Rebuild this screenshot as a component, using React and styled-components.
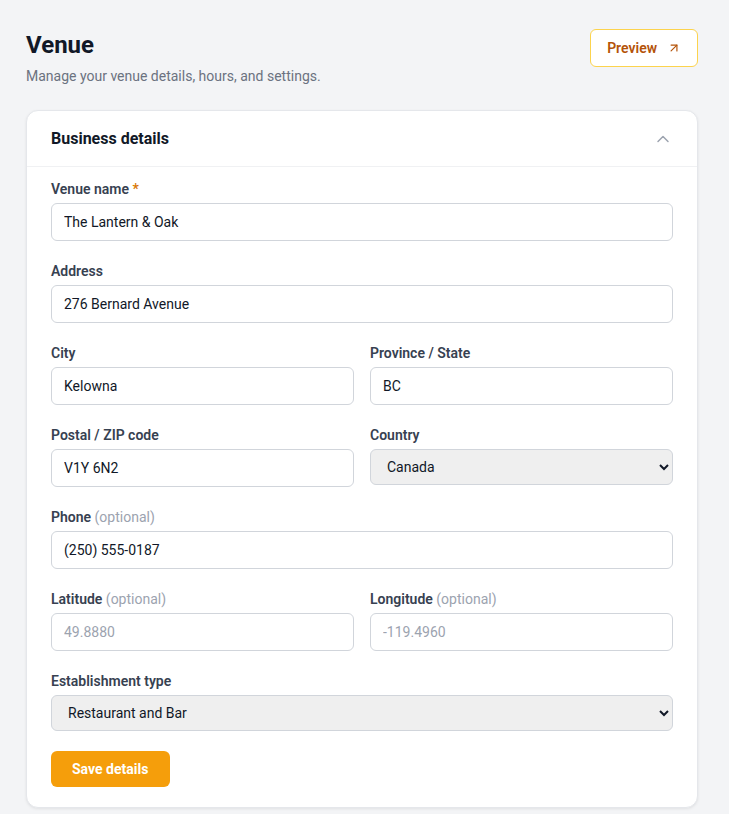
import React from "react";
import styled, { createGlobalStyle } from "styled-components";
import { ArrowUpRight, ChevronUp } from "lucide-react";

const GlobalStyle = createGlobalStyle`
  * { box-sizing: border-box; }
  body {
    margin: 0;
    background: #f3f4f6;
    font-family: Roboto, "Liberation Sans", sans-serif;
    color: #111827;
  }
`;

const Page = styled.div`
  padding: 28px 31px 6px 26px;
  min-height: 814px;
`;

const Header = styled.div`
  display: flex;
  justify-content: space-between;
  align-items: flex-start;
  margin-bottom: 24px;
`;

const Title = styled.h1`
  margin: 2px 0 0;
  font-size: 24px;
  font-weight: 700;
  line-height: 30px;
  color: #111827;
`;

const Subtitle = styled.p`
  margin: 6px 0 0;
  font-size: 14px;
  line-height: 20px;
  color: #6b7280;
`;

const PreviewButton = styled.button`
  display: flex;
  align-items: center;
  gap: 10px;
  height: 38px;
  margin-top: 1px;
  padding: 0 16px;
  background: #fff;
  border: 1px solid #fcd34d;
  border-radius: 6px;
  color: #b45309;
  font-family: inherit;
  font-size: 14px;
  font-weight: 600;
  cursor: pointer;
`;

const Card = styled.section`
  background: #fff;
  border: 1px solid #e5e7eb;
  border-radius: 12px;
  box-shadow: 0 1px 3px rgba(0, 0, 0, 0.08);
`;

const CardHeader = styled.div`
  display: flex;
  align-items: center;
  justify-content: space-between;
  height: 56px;
  padding: 0 24px;
  border-bottom: 1px solid #f0f1f3;
`;

const CardTitle = styled.h2`
  margin: 0;
  font-size: 16px;
  font-weight: 700;
  color: #111827;
`;

const Body = styled.div`
  display: flex;
  flex-direction: column;
  gap: 20px;
  padding: 12px 24px 20px;
`;

const Row = styled.div`
  display: grid;
  grid-template-columns: 1fr 1fr;
  gap: 16px;
`;

const Field = styled.div`
  display: flex;
  flex-direction: column;
  gap: 4px;
`;

const Label = styled.label`
  font-size: 14px;
  line-height: 20px;
  font-weight: 600;
  color: #374151;
`;

const Required = styled.span`
  color: #d97706;
`;

const Optional = styled.span`
  font-weight: 400;
  color: #9ca3af;
`;

const Input = styled.input`
  height: 38px;
  padding: 0 12px;
  border: 1px solid #d1d5db;
  border-radius: 6px;
  background: #fff;
  font-family: inherit;
  font-size: 14px;
  color: #111827;
  outline: none;
  &::placeholder {
    color: #9ca3af;
  }
`;

const Select = styled.select`
  height: 36px;
  padding: 0 8px 0 12px;
  border: 1px solid #d1d5db;
  border-radius: 6px;
  background-color: #efefef;
  font-family: inherit;
  font-size: 14px;
  color: #111827;
`;

const SaveButton = styled.button`
  align-self: flex-start;
  height: 36px;
  padding: 0 22px 0 21px;
  border: none;
  border-radius: 6px;
  background: #f59e0b;
  color: #fff;
  font-family: inherit;
  font-size: 14px;
  font-weight: 700;
  cursor: pointer;
`;

export default function App() {
  return (
    <>
      <GlobalStyle />
      <Page>
        <Header>
          <div>
            <Title>Venue</Title>
            <Subtitle>Manage your venue details, hours, and settings.</Subtitle>
          </div>
          <PreviewButton>
            Preview
            <ArrowUpRight size={14} strokeWidth={2} />
          </PreviewButton>
        </Header>
        <Card>
          <CardHeader>
            <CardTitle>Business details</CardTitle>
            <ChevronUp size={20} color="#9ca3af" strokeWidth={1.75} />
          </CardHeader>
          <Body>
            <Field>
              <Label>
                Venue name <Required>*</Required>
              </Label>
              <Input defaultValue="The Lantern & Oak" />
            </Field>
            <Field>
              <Label>Address</Label>
              <Input defaultValue="276 Bernard Avenue" />
            </Field>
            <Row>
              <Field>
                <Label>City</Label>
                <Input defaultValue="Kelowna" />
              </Field>
              <Field>
                <Label>Province / State</Label>
                <Input defaultValue="BC" />
              </Field>
            </Row>
            <Row>
              <Field>
                <Label>Postal / ZIP code</Label>
                <Input defaultValue="V1Y 6N2" />
              </Field>
              <Field>
                <Label>Country</Label>
                <Select defaultValue="Canada">
                  <option>Canada</option>
                  <option>United States</option>
                </Select>
              </Field>
            </Row>
            <Field>
              <Label>
                Phone <Optional>(optional)</Optional>
              </Label>
              <Input defaultValue="(250) 555-0187" />
            </Field>
            <Row>
              <Field>
                <Label>
                  Latitude <Optional>(optional)</Optional>
                </Label>
                <Input placeholder="49.8880" />
              </Field>
              <Field>
                <Label>
                  Longitude <Optional>(optional)</Optional>
                </Label>
                <Input placeholder="-119.4960" />
              </Field>
            </Row>
            <Field>
              <Label>Establishment type</Label>
              <Select defaultValue="Restaurant and Bar">
                <option>Restaurant and Bar</option>
                <option>Restaurant</option>
                <option>Bar</option>
              </Select>
            </Field>
            <SaveButton>Save details</SaveButton>
          </Body>
        </Card>
      </Page>
    </>
  );
}
